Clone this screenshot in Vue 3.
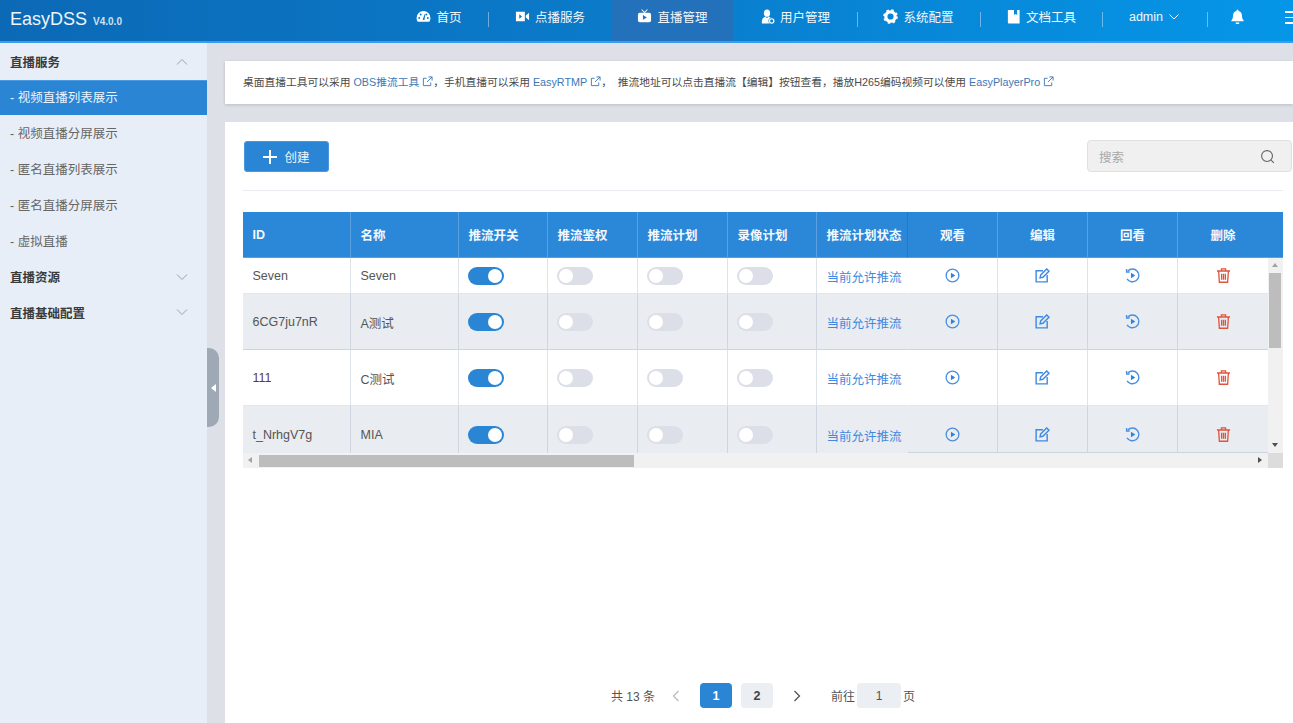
<script setup>
const navItems = [
  { label: '首页', icon: 'gauge', w: 98 },
  { label: '点播服务', icon: 'video', w: 124 },
  { label: '直播管理', icon: 'tv', w: 121, active: true },
  { label: '用户管理', icon: 'user', w: 124 },
  { label: '系统配置', icon: 'gear', w: 123 },
  { label: '文档工具', icon: 'book', w: 122 },
]
const columns = [108, 108, 89, 90, 90, 89, 91, 90, 90, 90, 90]
const heads = ['ID', '名称', '推流开关', '推流鉴权', '推流计划', '录像计划', '推流计划状态']
const actions = ['观看', '编辑', '回看', '删除']
const rows = [
  { id: 'Seven', name: 'Seven', size: 'short' },
  { id: '6CG7ju7nR', name: 'A测试' },
  { id: '111', name: 'C测试', odd: true },
  { id: 't_NrhgV7g', name: 'MIA', size: 'tall' },
]
const subs = ['- 视频直播列表展示', '- 视频直播分屏展示', '- 匿名直播列表展示', '- 匿名直播分屏展示', '- 虚拟直播']
</script>

<template>
  <div class="page">
    <header class="top">
      <div class="logo">EasyDSS <small>V4.0.0</small></div>
      <nav class="nav">
        <a v-for="n in navItems" :key="n.label" class="nav-item" :class="{ active: n.active }" :style="{ width: n.w + 'px' }">
          <svg class="nav-icon" viewBox="0 0 16 16" fill="#fff">
            <template v-if="n.icon === 'gauge'">
              <path d="M8 2.2A7.4 7.4 0 0 0 .6 9.6c0 1.500.4 2.800 1.200 3.900h12.400c.8-1.100 1.200-2.400 1.200-3.900A7.400 7.400 0 0 0 8 2.200z" />
              <circle cx="3.400" cy="9.600" r="1" fill="#0b74c4" />
              <circle cx="5" cy="5.800" r="1" fill="#0b74c4" />
              <circle cx="11" cy="5.800" r="1" fill="#0b74c4" />
              <circle cx="12.600" cy="9.600" r="1" fill="#0b74c4" />
              <path d="M7 11.500 9.300 5.400l.6.200L9 11.800z" fill="#0b74c4" />
            </template>
            <template v-else-if="n.icon === 'video'">
              <path d="M1 3h9.500v10H1zM11.500 7l3.500-3v8l-3.500-3z" />
              <path d="M4.500 5.500 7.500 8l-3 2.500z" fill="#0b78c8" />
            </template>
            <template v-else-if="n.icon === 'tv'">
              <rect x="1" y="4" width="14" height="10" rx="2" />
              <path d="M4.500 .8 7.500 4h1l3-3.200-.7-.5L8 3 5.200.3z" />
              <path d="M6.300 6.500 10.500 9l-4.200 2.500z" fill="#2271ba" />
            </template>
            <template v-else-if="n.icon === 'user'">
              <ellipse cx="7.500" cy="4.400" rx="3.300" ry="3.900" />
              <path d="M2 15.500c-.4-4 1-6.500 3.600-7.200l1.900 1.200 1.900-1.200c.9.200 1.600.7 2.100 1.300-1.500.3-2.500 1.600-2.500 3 0 1.200.5 2.200 1.400 2.900z" />
              <circle cx="12.500" cy="12.700" r="2.300" fill="none" stroke="#fff" stroke-width="1.300" />
            </template>
            <template v-else-if="n.icon === 'gear'">
              <circle cx="8" cy="8" r="5" fill="none" stroke="#fff" stroke-width="3.400" />
              <circle cx="8" cy="8" r="6.600" fill="none" stroke="#fff" stroke-width="2.400" stroke-dasharray="2.600 2.580" />
            </template>
            <template v-else-if="n.icon === 'book'">
              <path d="M2 1h12.500v14.500H3a1 1 0 0 1-1-1zM8.500 1v5.500l1.700-1.300 1.700 1.300V1z" fill-rule="evenodd" />
            </template>
          </svg>
          <span>{{ n.label }}</span>
        </a>
        <a class="nav-item admin"><span>admin</span>
          <svg class="chev-down" viewBox="0 0 12 12" fill="none" stroke="#fff" stroke-width="1"><path d="M1.500 3.500 6 8l4.500-4.500" /></svg>
        </a>
        <a class="nav-item bell">
          <svg class="nav-icon" viewBox="0 0 16 16" fill="#fff"><path d="M8 .5c.6 0 1 .4 1 1v.6c2.300.5 3.800 2.400 3.800 4.900 0 2.800.6 4 1.700 5v1H1.500v-1c1.100-1 1.700-2.200 1.700-5 0-2.500 1.500-4.400 3.800-4.900v-.6c0-.6.4-1 1-1zM6 14.500h4a2 2 0 0 1-4 0z" /></svg>
        </a>
        <a class="burger"><i></i><i></i><i></i></a>
      </nav>
    </header>

    <div class="main">
      <aside class="side">
        <div class="sec">
          <span>直播服务</span>
          <svg class="sec-chev" viewBox="0 0 12 12" fill="none" stroke="#9aa1aa" stroke-width="1"><path d="M1 8.500 6 3.500l5 5" /></svg>
        </div>
        <div v-for="(s, i) in subs" :key="s" class="sub" :class="{ on: i === 0 }">{{ s }}</div>
        <div class="sec">
          <span>直播资源</span>
          <svg class="sec-chev" viewBox="0 0 12 12" fill="none" stroke="#9aa1aa" stroke-width="1"><path d="M1 3.500 6 8.500l5-5" /></svg>
        </div>
        <div class="sec">
          <span>直播基础配置</span>
          <svg class="sec-chev" viewBox="0 0 12 12" fill="none" stroke="#9aa1aa" stroke-width="1"><path d="M1 3.500 6 8.500l5-5" /></svg>
        </div>
        <div class="handle"><i></i></div>
      </aside>

      <main class="content">
        <div class="notice">
          桌面直播工具可以采用 <a>OBS推流工具<svg class="ext" viewBox="0 0 12 12" fill="none" stroke="currentColor"><path d="M9.500 7v3.500h-8v-8H5M7 1h4v4M11 1 5.500 6.500" /></svg></a>，手机直播可以采用 <a>EasyRTMP<svg class="ext" viewBox="0 0 12 12" fill="none" stroke="currentColor"><path d="M9.500 7v3.500h-8v-8H5M7 1h4v4M11 1 5.500 6.500" /></svg></a>，&nbsp;&nbsp;推流地址可以点击直播流【编辑】按钮查看，播放H265编码视频可以使用 <a>EasyPlayerPro<svg class="ext" viewBox="0 0 12 12" fill="none" stroke="currentColor"><path d="M9.500 7v3.500h-8v-8H5M7 1h4v4M11 1 5.500 6.500" /></svg></a>
        </div>

        <section class="card">
          <div class="tools">
            <button class="create">
              <svg viewBox="0 0 14 14" fill="none" stroke="#fff" stroke-width="2"><path d="M7 0v14M0 7h14" /></svg>
              <span>创建</span>
            </button>
            <div class="search">
              <span>搜索</span>
              <svg viewBox="0 0 16 16" fill="none" stroke="#666" stroke-width="1.200"><circle cx="7.500" cy="7.500" r="5.800" /><path d="m11.800 11.800 3 3" /></svg>
            </div>
          </div>

          <div class="table-box">
            <table class="thead">
              <colgroup>
                <col v-for="(c, i) in columns" :key="i" :style="{ width: c + 'px' }" />
                <col class="gutter" />
              </colgroup>
              <tr>
                <th v-for="h in heads" :key="h">{{ h }}</th>
                <th v-for="a in actions" :key="a" class="center">{{ a }}</th>
                <th class="gut"></th>
              </tr>
            </table>
            <div class="body-wrap">
              <div class="body-clip">
                <table class="tbody">
                  <colgroup>
                    <col v-for="(c, i) in columns" :key="i" :style="{ width: c + 'px' }" />
                  </colgroup>
                  <tr v-for="(r, i) in rows" :key="r.id" :class="[r.size, { stripe: i % 2 === 1 }]">
                    <td :class="{ odd: r.odd }">{{ r.id }}</td>
                    <td>{{ r.name }}</td>
                    <td><span class="sw on"><i></i></span></td>
                    <td><span class="sw"><i></i></span></td>
                    <td><span class="sw"><i></i></span></td>
                    <td><span class="sw"><i></i></span></td>
                    <td class="status"><span>当前允许推流</span></td>
                    <td class="center">
                      <svg class="act" viewBox="0 0 16 16" fill="none" stroke="#4a8fe0" stroke-width="1.400"><circle cx="8" cy="8" r="6.800" /><path d="M6.300 5v6l4.700-3z" fill="#2f84d8" stroke="none" /></svg>
                    </td>
                    <td class="center">
                      <svg class="act" viewBox="0 0 16 16" fill="none" stroke="#3f8ae0" stroke-width="1.500"><path d="M8.500 3H1.200v11.800H13V7.500" /><path d="M6 7.500 12.500 1l2.400 2.400-6.500 6.500-3 .7z" /></svg>
                    </td>
                    <td class="center">
                      <svg class="act" viewBox="0 0 16 16" fill="none" stroke="#4a8fe0" stroke-width="1.500"><path d="M3 3.300A6.800 6.800 0 1 1 2.200 11.500" /><path d="M1.700 1v3.300H5" /><path d="M6.300 5v6l4.700-3z" fill="#2f84d8" stroke="none" /></svg>
                    </td>
                    <td class="center">
                      <svg class="act" viewBox="0 0 16 16" fill="none" stroke="#e0533c" stroke-width="1.400"><path d="M1 3.200h14M5.800 3V1h4.400v2M2.800 3.400l.8 11.800h8.800l.8-11.800M6 6v6.500M8 6v6.500M10 6v6.500" /></svg>
                    </td>
                  </tr>
                </table>
              </div>
              <div class="vbar">
                <i class="up"></i>
                <b></b>
                <i class="down"></i>
              </div>
            </div>
            <div class="hbar">
              <i class="left"></i>
              <b></b>
              <i class="right"></i>
              <u></u>
            </div>
          </div>

          <div class="pager">
            <span>共 13 条</span>
            <svg class="pg-arrow prev" viewBox="0 0 10 12" fill="none" stroke="#b9bdc4" stroke-width="1.300"><path d="M7.500 1 2.500 6l5 5" /></svg>
            <button class="pg cur">1</button>
            <button class="pg">2</button>
            <svg class="pg-arrow next" viewBox="0 0 10 12" fill="none" stroke="#555" stroke-width="1.300"><path d="M2.500 1l5 5-5 5" /></svg>
            <span class="goto">前往</span>
            <span class="pg-input">1</span>
            <span>页</span>
          </div>
        </section>
      </main>
    </div>
  </div>
</template>

<style>
html, body { margin: 0; overflow: hidden; }
</style>

<style scoped>
* { box-sizing: border-box; }
.page {
  width: 1293px; height: 723px; overflow: hidden; display: flex; flex-direction: column;
  font-family: "Liberation Sans", "Noto Sans CJK SC", sans-serif; font-size: 12.5px; color: #555; background: #dde0e7;
}
.top {
  height: 43px; flex: none; display: flex; align-items: stretch;
  background: linear-gradient(90deg, #0c69b6 0%, #0a7ccb 50%, #0596e8 100%);
  border-bottom: 2px solid #3a9cf0; color: #fff;
}
.logo { width: 390px; flex: none; padding-left: 10px; font-size: 18px; line-height: 39px; color: #eef5fb; white-space: nowrap; }
.logo small { font-size: 10px; font-weight: bold; color: #cfe0ef; margin-left: 1px; }
.nav { display: flex; flex: 1; min-width: 0; }
.nav-item { position: relative; display: flex; align-items: center; justify-content: center; gap: 5px; height: 41px; padding-bottom: 8px; flex: none; color: #f2f8fd; }
.nav-item + .nav-item::before { content: ""; position: absolute; left: 0; top: 12px; height: 15px; width: 1px; background: rgba(255,255,255,.4); }
.nav-item.active::before, .nav-item.active + .nav-item::before { display: none; }
.nav-item.active { background: #2271ba; }
.nav-icon { width: 15px; height: 15px; flex: none; }
.admin { width: 105px; }
.bell { width: 60px; }
.chev-down { width: 12px; height: 12px; }
.burger { margin-left: 18px; display: flex; flex-direction: column; gap: 4px; padding-top: 11px; width: 20px; flex: none; }
.burger i { display: block; height: 1.500px; background: #fff; }

.main { flex: 1; display: flex; min-height: 0; }
.side { position: relative; width: 207px; flex: none; background: #e8eef7; padding-top: 1px; }
.sec {
  height: 35.700px; display: flex; align-items: center; justify-content: space-between;
  padding: 0 19px 0 10px; font-weight: bold; color: #3a3a3a; font-size: 12.500px;
}
.sec-chev { width: 12px; height: 12px; }
.sub { height: 35.800px; line-height: 38px; padding-left: 10px; color: #666; }
.sub.on { background: #2a85d5; color: #eaf4fd; border-top: 1px solid #4a9be2; line-height: 35.800px; }
.handle {
  position: absolute; left: 207px; top: 305px; width: 12px; height: 79px;
  background: #9fa9b5; border-radius: 0 10px 10px 0; display: flex; align-items: center; justify-content: center;
}
.handle i { width: 0; height: 0; border: 4px solid transparent; border-left: 0; border-right: 5px solid #fff; }

.content { flex: 1; min-width: 0; padding: 18px 0 0 18px; display: flex; flex-direction: column; }
.notice {
  height: 43px; flex: none; background: #fff; box-shadow: 0 1px 3px rgba(0,0,0,.16);
  padding-left: 18px; line-height: 43px; font-size: 10.750px; color: #4a4a4a; white-space: nowrap;
}
.notice a { color: #3c77b5; }
.ext { width: 11px; height: 11px; margin-left: 3px; vertical-align: -1px; }
.card { margin-top: 18px; flex: 1; min-height: 0; background: #fff; padding: 18px 1px 0 18px; display: flex; flex-direction: column; }
.tools { height: 51px; flex: none; display: flex; justify-content: space-between; align-items: flex-start; position: relative; }
.tools::after { content: ""; position: absolute; left: 0; right: 9px; bottom: 0; height: 1.500px; background: #e9ecf1; }
.create {
  margin: 1px 0 0 1px; width: 85px; height: 31px; border: 1px solid #4b97dc; border-radius: 3px; background: #2a85d5;
  color: #eef6fd; display: flex; align-items: center; justify-content: center; gap: 7px; font: inherit; padding: 0;
}
.create svg { width: 14px; height: 14px; }
.search {
  width: 205px; height: 32px; background: #f0f0f0; border: 1px solid #e0e0e0; border-radius: 4px;
  display: flex; align-items: center; justify-content: space-between; padding: 0 16px 0 11px; color: #a8a8a8;
}
.search svg { width: 15px; height: 15px; }

.table-box { margin-top: 21px; width: 1040px; flex: none; }
table { border-collapse: separate; border-spacing: 0; table-layout: fixed; }
.thead { width: 1040px; }
.thead .gutter { width: 15px; }
.thead th {
  height: 46px; background: #2b87d7; color: #f4f9fe; text-align: left; padding: 0 0 0 9.500px; font-size: 12.500px;
  font-weight: bold; border-right: 1px solid #5a9fdf; border-bottom: 1px solid #5a9fdf; white-space: nowrap; overflow: hidden;
}
.thead th:nth-child(7) { border-right-color: #2578c2; }
.thead th:nth-child(11) { border-right: 0; }
.thead th.center { text-align: center; padding: 0; }
.thead th.gut { border-right: 0; padding: 0; }
.body-wrap { display: flex; height: 195px; }
.body-clip { position: relative; width: 1025px; height: 195px; overflow: hidden; }
.body-clip::after { content: ""; position: absolute; left: 665px; right: 0; bottom: 0; height: 1px; background: #ccd4df; }
.tbody { width: 1025px; }
.tbody tr { height: 56px; }
.tbody tr.short { height: 36px; }
.tbody tr.tall { height: 58px; }
.tbody td {
  padding: 1px 0 0 9.500px; border-right: 1px solid #dfe3ea; border-bottom: 1px solid #e3e6ec; background: #fff; white-space: nowrap; overflow: hidden; color: #555;
}
.tbody td.center { text-align: center; padding: 1px 0 0; }
.tbody tr.stripe td { background: #e9ecf1; border-right-color: #cfd6e0; border-bottom-color: #ccd4df; }
.tbody tr td.status { border-right-color: transparent; }
.tbody tr td:last-child { border-right: 0; }
.tbody td.odd { color: #5e3b3b; }
.status span { color: #3e8ae0; }
.act { width: 15px; height: 15px; vertical-align: -1px; display: inline-block; }
.sw { display: inline-block; vertical-align: middle; margin-left: -0.500px; width: 36px; height: 18px; border-radius: 9px; background: #dcdfe7; position: relative; }
.sw i { position: absolute; left: 2px; top: 2px; width: 14px; height: 14px; border-radius: 50%; background: #fff; }
.sw.on { background: #2a85d5; }
.sw.on i { left: 20px; }

.vbar { width: 15px; height: 195px; background: #f1f1f1; position: relative; }
.vbar b { position: absolute; left: 1px; right: 2px; top: 15px; height: 75px; background: #bdbdbd; }
.vbar i, .hbar i { position: absolute; width: 0; height: 0; border: 3.500px solid transparent; }
.vbar .up { left: 4px; top: 5px; border-top: 0; border-bottom: 4px solid #a3a3a3; }
.vbar .down { left: 4px; bottom: 6px; border-bottom: 0; border-top: 4px solid #505050; }
.hbar { position: relative; height: 15px; background: #f1f1f1; }
.hbar b { position: absolute; left: 16px; top: 2px; width: 375px; height: 12px; background: #bdbdbd; }
.hbar .left { left: 5px; top: 4px; border-left: 0; border-right: 4px solid #a3a3a3; }
.hbar .right { left: 1015px; top: 4px; border-right: 0; border-left: 4px solid #505050; }
.hbar u { position: absolute; right: 0; top: 0; width: 15px; height: 15px; background: #dcdcdc; }

.pager {
  margin-top: auto; padding: 0 9px 15px 0; height: 40px; flex: none; display: flex; align-items: center; justify-content: center; color: #555; font-size: 12px;
}
.pg-arrow { width: 10px; height: 12px; }
.prev { margin: 0 19px 0 16px; }
.next { margin: 0 29px 0 19px; }
.pg { width: 32px; height: 25px; border: 0; border-radius: 4px; background: #ebeef2; color: #444; font: bold 12.500px "Liberation Sans", sans-serif; padding: 0; }
.pg.cur { background: #2a85d5; color: #fff; margin-right: 9px; }
.goto { margin-right: 2px; }
.pg-input { width: 44px; height: 25px; margin-right: 2px; background: #ebeef2; border-radius: 4px; display: flex; align-items: center; justify-content: center; color: #555; }
</style>
